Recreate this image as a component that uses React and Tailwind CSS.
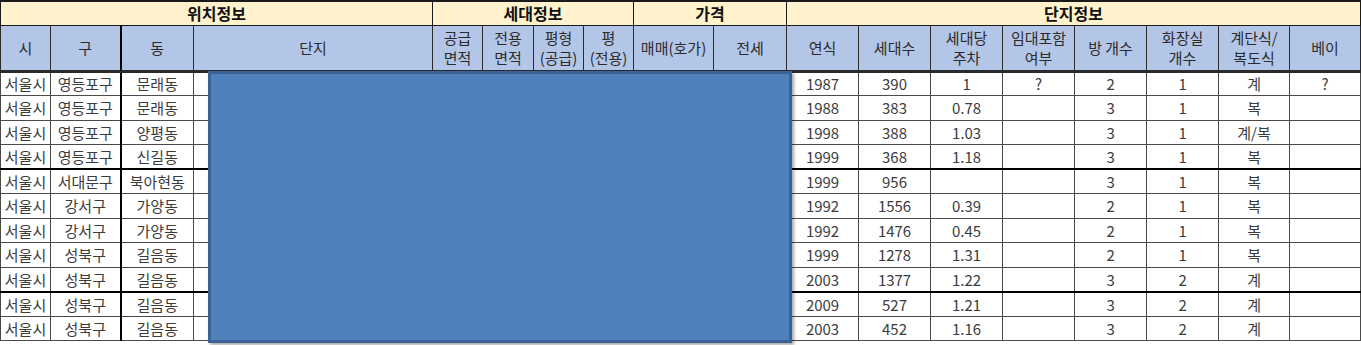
const FONT = { fontFamily: '"Malgun Gothic", "Noto Sans CJK KR", "Noto Sans", sans-serif' }

const widths = [50, 70, 73, 239, 50, 51, 50, 50, 80, 73, 72, 72, 72, 72, 72, 72, 71, 71]

const rows = [
    ['서울시', '영등포구', '문래동', '1987', '390', '1', '?', '2', '1', '계', '?'],
    ['서울시', '영등포구', '문래동', '1988', '383', '0.78', '', '3', '1', '복', ''],
    ['서울시', '영등포구', '양평동', '1998', '388', '1.03', '', '3', '1', '계/복', ''],
    ['서울시', '영등포구', '신길동', '1999', '368', '1.18', '', '3', '1', '복', ''],
    ['서울시', '서대문구', '북아현동', '1999', '956', '', '', '3', '1', '복', ''],
    ['서울시', '강서구', '가양동', '1992', '1556', '0.39', '', '2', '1', '복', ''],
    ['서울시', '강서구', '가양동', '1992', '1476', '0.45', '', '2', '1', '복', ''],
    ['서울시', '성북구', '길음동', '1999', '1278', '1.31', '', '2', '1', '복', ''],
    ['서울시', '성북구', '길음동', '2003', '1377', '1.22', '', '3', '2', '계', ''],
    ['서울시', '성북구', '길음동', '2009', '527', '1.21', '', '3', '2', '계', ''],
    ['서울시', '성북구', '길음동', '2003', '452', '1.16', '', '3', '2', '계', ''],
]

// rows followed by a heavy rule
const heavy = [3, 8]

const subHeads = [
    ['시'], ['구'], ['동'], ['단지'],
    ['공급', '면적'], ['전용', '면적'], ['평형', '(공급)'], ['평', '(전용)'],
    ['매매(호가)'], ['전세'],
    ['연식'], ['세대수'], ['세대당', '주차'], ['임대포함', '여부'], ['방 개수'], ['화장실', '개수'], ['계단식/', '복도식'], ['베이'],
]

export default function App() {
    return (
        <div className="relative w-[1361px] h-[345px] bg-white overflow-hidden" style={FONT}>
            <table className="border-collapse table-fixed w-[1360px]">
                <colgroup>
                    {widths.map((w, i) => <col key={i} style={{ width: w }} />)}
                </colgroup>
                <thead>
                    {/* group headings */}
                    <tr className="h-[24px] bg-[#fff2cc]">
                        <th colSpan={4} className="border border-t-2 border-[#1a1a1a] text-[16px] font-bold text-[#111] leading-none">위치정보</th>
                        <th colSpan={4} className="border border-t-2 border-[#1a1a1a] text-[16px] font-bold text-[#111] leading-none">세대정보</th>
                        <th colSpan={2} className="border border-t-2 border-[#1a1a1a] text-[16px] font-bold text-[#111] leading-none">가격</th>
                        <th colSpan={8} className="border border-t-2 border-[#1a1a1a] text-[16px] font-bold text-[#111] leading-none">단지정보</th>
                    </tr>
                    {/* column headings */}
                    <tr className="h-[46px] bg-[#b4c6e7]">
                        {subHeads.map((lines, i) => (
                            <th
                                key={i}
                                className={`border border-b-[3px] border-b-double border-[#2a2a2a] font-normal text-[15px] text-[#2b2b2b] leading-[20px] p-0 ${i === 1 ? 'border-r-2 border-r-black' : ''}`}
                            >
                                {lines.map((l, j) => <div key={j} className="whitespace-nowrap">{l}</div>)}
                            </th>
                        ))}
                    </tr>
                </thead>
                <tbody>
                    {rows.map((r, ri) => {
                        const [si, gu, dong, ...rest] = r
                        const cells = [si, gu, dong, '', '', '', '', '', '', '', ...rest]
                        const rowBorder = heavy.includes(ri) ? 'border-b-2 border-b-black' : ''
                        return (
                            <tr key={ri} className="h-[24.5px]">
                                {cells.map((c, ci) => (
                                    <td
                                        key={ci}
                                        className={`border border-[#4a4a4a] p-0 text-center text-[15px] text-[#3c3c3c] leading-none whitespace-nowrap overflow-hidden ${rowBorder} ${ci === 1 ? 'border-r-2 border-r-black' : ''}`}
                                    >
                                        {c}
                                    </td>
                                ))}
                            </tr>
                        )
                    })}
                </tbody>
            </table>

            {/* blue shape covering the complex names and prices */}
            <div className="absolute left-[208px] top-[71px] w-[584px] h-[272px] bg-[#4f81bd] border-[3px] border-[#3b6397] shadow-[2px_2px_3px_rgba(0,0,0,0.35)]" />
        </div>
    )
}
